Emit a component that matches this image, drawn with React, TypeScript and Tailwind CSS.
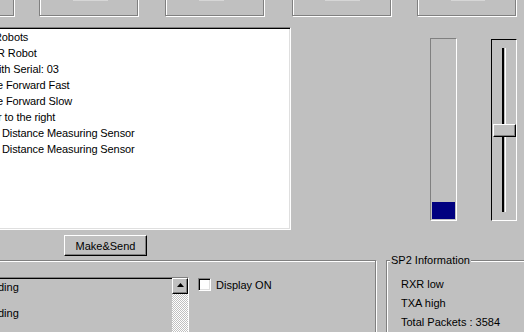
const sunken =
  "border border-t-[#808080] border-l-[#808080] border-r-white border-b-white shadow-[inset_1px_1px_0_#000,inset_-1px_-1px_0_#dfdfdf]";
const raised =
  "border border-t-white border-l-white border-r-black border-b-black shadow-[inset_-1px_-1px_0_#808080]";
const etched = "border border-[#808080] shadow-[inset_1px_1px_0_#fff,1px_1px_0_#fff]";

const rows = [
  { text: "Robots", cls: "ml-[3px]" },
  { text: "R Robot", cls: "ml-[6px]" },
  { text: "ith Serial: 03", cls: "ml-[8px]" },
  { text: "e Forward Fast", cls: "ml-[6px]" },
  { text: "e Forward Slow", cls: "ml-[6px]" },
  { text: "r to the right", cls: "ml-[7px]" },
  { text: "Distance Measuring Sensor", cls: "ml-[11px]" },
  { text: "Distance Measuring Sensor", cls: "ml-[11px]" },
];

const ToolButton = ({ className, inner }: { className: string; inner: string }) => (
  <div className={`${etched} ${className} -mt-[24px] h-[40px] w-[99px] shrink-0 pt-[16px]`}>
    <div className={`${inner} h-[8px] border-b border-[#d6d6d6] bg-[#ececec]`} />
  </div>
);

export default function App() {
  return (
    <div className="flex h-[332px] w-[524px] flex-col overflow-hidden bg-[#c0c0c0] font-['Liberation_Sans',Arial,sans-serif] text-[11px] text-black">
      {/* toolbar buttons, cut off at the top */}
      <div className="flex h-[17px] items-start">
        <ToolButton className="-ml-[85px]" inner="ml-[34px] w-[35px]" />
        <ToolButton className="ml-[25px]" inner="ml-[33px] w-[35px]" />
        <ToolButton className="ml-[27px]" inner="ml-[33px] w-[25px]" />
        <ToolButton className="ml-[28px]" inner="ml-[32px] w-[35px]" />
        <ToolButton className="ml-[26px]" inner="ml-[33px] w-[34px]" />
      </div>

      <div className="mt-[11px] flex items-start">
        <div className={`${sunken} -ml-[10px] h-[203px] w-[301px] shrink-0 bg-white pt-[1px] leading-[16px] tracking-[-0.1px]`}>
          {rows.map((r, i) => (
            <div key={i} className={`${r.cls} whitespace-nowrap`}>
              {r.text}
            </div>
          ))}
        </div>

        <div className="ml-[139px] mt-[11px] flex h-[183px] w-[27px] shrink-0 flex-col justify-end border border-t-[#808080] border-l-[#808080] border-r-white border-b-white p-[1px]">
          <div className="h-[17px] bg-[#000080]" />
        </div>

        <div className="relative ml-[34px] mt-[12px] h-[182px] w-[26px] shrink-0 border border-t-black border-l-black border-r-white border-b-white">
          <div className="ml-[10px] mt-[8px] h-[164px] w-[4px] border-l-2 border-r border-l-black border-r-white" />
          <div className={`${raised} absolute left-[1px] top-[84px] h-[13px] w-[23px] bg-[#c0c0c0]`} />
        </div>
      </div>

      <div className="mt-[5px] flex">
        <button className={`${raised} ml-[64px] flex h-[21px] w-[83px] items-center justify-center bg-[#c0c0c0] pt-[2px] leading-[13px]`}>
          Make&amp;Send
        </button>
      </div>

      <div className="mt-[4px] flex items-start">
        <div className={`${etched} -ml-[10px] flex h-[100px] w-[386px] shrink-0 items-start`}>
          <div className={`${sunken} -ml-[11px] mt-[16px] flex h-[60px] w-[209px] shrink-0 bg-[#c0c0c0]`}>
            <div className="flex flex-1 flex-col gap-[12px] pt-[2px] leading-[14px]">
              <div className="ml-[17px]">ding</div>
              <div className="ml-[17px]">ding</div>
            </div>
            <div className="flex w-[16px] flex-col">
              <div className={`${raised} flex h-[16px] items-center justify-center bg-[#c0c0c0] pb-[2px]`}>
                <svg width="7" height="4" viewBox="0 0 7 4">
                  <path d="M3.5 0 L7 4 L0 4 Z" fill="#000" />
                </svg>
              </div>
              <div className="flex-1 bg-[image:repeating-conic-gradient(#fff_0_25%,#c0c0c0_0_50%)] bg-[length:2px_2px]" />
            </div>
          </div>
          <div className={`${sunken} ml-[9px] mt-[17px] h-[13px] w-[13px] shrink-0 bg-white`} />
          <div className="ml-[5px] mt-[18px] whitespace-nowrap leading-[13px]">Display ON</div>
        </div>

        <div className={`${etched} relative ml-[10px] h-[100px] w-[160px] shrink-0 pl-[14px] pt-[14px] leading-[19px]`}>
          <div className="absolute left-[3px] top-[-7px] bg-[#c0c0c0] px-[1px] leading-[13px] whitespace-nowrap">
            SP2 Information
          </div>
          <div>RXR low</div>
          <div>TXA high</div>
          <div className="whitespace-nowrap">Total Packets : 3584</div>
        </div>
      </div>
    </div>
  );
}
